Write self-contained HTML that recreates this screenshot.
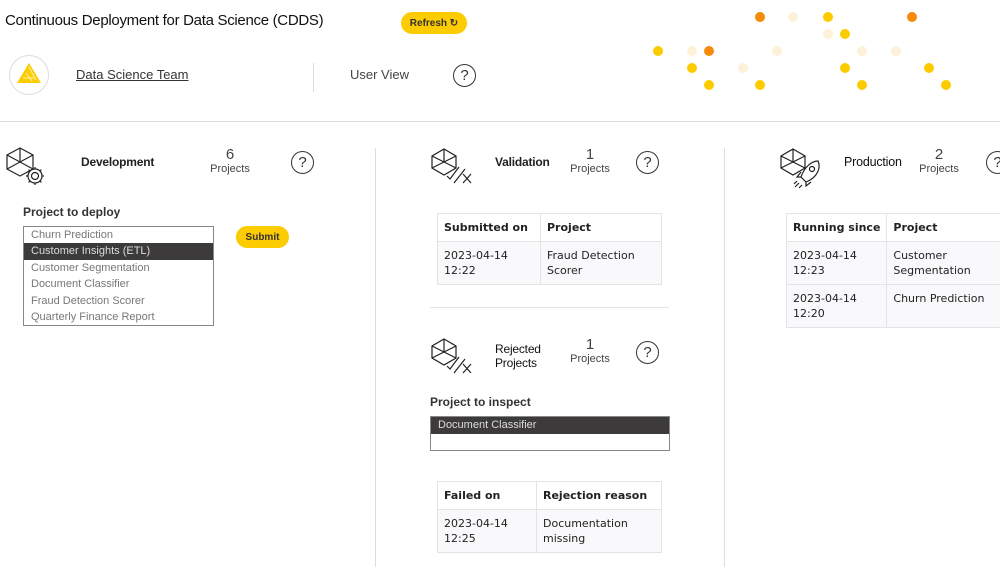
<!DOCTYPE html>
<html><head><meta charset="utf-8"><style>
*{margin:0;padding:0;box-sizing:border-box}
body{width:1000px;height:567px;overflow:hidden;background:#fff;font-family:"Liberation Sans",Arial,sans-serif;color:#222;position:relative}
.a{position:absolute;white-space:nowrap}
.btn{position:absolute;background:#fccb00;border-radius:12px;font-size:10px;font-weight:bold;color:#333;text-align:center}
.q{position:absolute;width:23px;height:23px;border:1.3px solid #333;border-radius:50%;font-size:15px;text-align:center;line-height:21px;color:#333}
.dot{position:absolute;width:10px;height:10px;border-radius:50%}
.y{background:#fccb00}.o{background:#f58a0b}.c{background:#fdf1d9}
.num{position:absolute;text-align:center;color:#444;font-size:11px;line-height:13px}
.num b{display:block;font-weight:normal;font-size:15px;line-height:16px}
table{position:absolute;border-collapse:collapse;font-family:"DejaVu Sans",sans-serif;font-size:11px;color:#222}
td,th{border:1px solid #e4e4e4;padding:6px 6px;text-align:left;vertical-align:top;line-height:15px}
th{font-weight:bold;height:28px;vertical-align:middle;background:#fff;white-space:nowrap}
td{background:#f9f8fa}
.lst{position:absolute;border:1px solid #888;font-size:11px;color:#777;background:#fff}
.lst div{height:16.4px;line-height:16.4px;padding-left:7px}
.lst .s{background:#3c3a3b;color:#ddd}
.lbl{position:absolute;font-size:12px;font-weight:bold;color:#333}
.h{position:absolute;font-size:12px;font-weight:bold;color:#222;letter-spacing:-0.2px}
</style></head><body>
<div class="a" style="left:5px;top:12px;font-size:15px;color:#111;letter-spacing:-0.3px">Continuous Deployment for Data Science (CDDS)</div>
<div class="btn" style="left:401px;top:12px;width:66px;height:22px;line-height:22px;padding-top:1px">Refresh ↻</div>

<div class="a" style="left:9px;top:55px;width:40px;height:40px;border:1.5px solid #ddd;border-radius:50%"></div>
<svg class="a" style="left:17px;top:62px" width="26" height="24"><polygon points="12,1 24,21 0,21" fill="#fccb00"/><path d="M12,5 L19,18 M9,11 L15,19 M6,16 L17,16" stroke="#fff3b0" stroke-width="1"/></svg>
<div class="a" style="left:76px;top:67px;font-size:13px;color:#333;text-decoration:underline">Data Science Team</div>
<div class="a" style="left:313px;top:63px;width:1px;height:29px;background:#ddd"></div>
<div class="a" style="left:350px;top:67px;font-size:13px;color:#444">User View</div>
<div class="q" style="left:453px;top:64px">?</div>

<div class="dot o" style="left:755px;top:12px"></div><div class="dot c" style="left:788px;top:12px"></div><div class="dot y" style="left:823px;top:12px"></div><div class="dot o" style="left:907px;top:12px"></div>
<div class="dot c" style="left:823px;top:29px"></div><div class="dot y" style="left:840px;top:29px"></div>
<div class="dot y" style="left:653px;top:46px"></div><div class="dot c" style="left:687px;top:46px"></div><div class="dot o" style="left:704px;top:46px"></div><div class="dot c" style="left:772px;top:46px"></div><div class="dot c" style="left:857px;top:46px"></div><div class="dot c" style="left:891px;top:46px"></div>
<div class="dot y" style="left:687px;top:63px"></div><div class="dot c" style="left:738px;top:63px"></div><div class="dot y" style="left:840px;top:63px"></div><div class="dot y" style="left:924px;top:63px"></div>
<div class="dot y" style="left:704px;top:80px"></div><div class="dot y" style="left:755px;top:80px"></div><div class="dot y" style="left:857px;top:80px"></div><div class="dot y" style="left:941px;top:80px"></div>

<div class="a" style="left:0;top:121px;width:1000px;height:1px;background:#ddd"></div>
<div class="a" style="left:375px;top:148px;width:1px;height:419px;background:#ddd"></div>
<div class="a" style="left:724px;top:148px;width:1px;height:419px;background:#ddd"></div>

<!-- Development -->
<svg class="a" style="left:6px;top:146px" width="42" height="42" fill="none" stroke="#222" stroke-width="1.2">
<polygon points="14,2 27,9 27,23 14,30 1,23 1,9"/><path d="M14,2 V16 M1,23 L14,16 L27,23 M1,9 L14,16 L27,9"/>
<circle cx="29" cy="30" r="4"/><path d="M29,21 v3 M29,36 v3 M20,30 h3 M35,30 h3 M22.6,23.6 l2,2 M33.4,34.4 l2,2 M22.6,36.4 l2,-2 M33.4,25.6 l2,-2"/><circle cx="29" cy="30" r="7" fill="#fff"/><circle cx="29" cy="30" r="3.5"/>
</svg>
<div class="h" style="left:81px;top:155px">Development</div>
<div class="num" style="left:205px;top:147px;width:50px"><b>6</b>Projects</div>
<div class="q" style="left:291px;top:151px">?</div>
<div class="lbl" style="left:23px;top:205px">Project to deploy</div>
<div class="lst" style="left:23px;top:226px;width:191px;height:100px">
<div>Churn Prediction</div><div class="s">Customer Insights (ETL)</div><div>Customer Segmentation</div><div>Document Classifier</div><div>Fraud Detection Scorer</div><div>Quarterly Finance Report</div></div>
<div class="btn" style="left:236px;top:226px;width:53px;height:22px;line-height:22px;padding-top:1px">Submit</div>

<!-- Validation -->
<svg class="a" style="left:431px;top:147px" width="44" height="40" fill="none" stroke="#222" stroke-width="1.2">
<polygon points="13,2 25,9 25,21 13,28 1,21 1,9"/><path d="M13,2 V15 M1,21 L13,15 L25,21 M1,9 L13,15 L25,9"/>
<path d="M16,29 l3,3 l9,-12 M23,36 l11,-14 M32,27 l8,9 M40,27 l-8,9"/>
</svg>
<div class="h" style="left:495px;top:155px">Validation</div>
<div class="num" style="left:565px;top:147px;width:50px"><b>1</b>Projects</div>
<div class="q" style="left:636px;top:151px">?</div>
<table style="left:437px;top:213px;width:225px"><tr><th style="width:103px">Submitted on</th><th>Project</th></tr>
<tr><td style="height:43px">2023-04-14<br>12:22</td><td>Fraud Detection<br>Scorer</td></tr></table>
<div class="a" style="left:430px;top:307px;width:239px;height:1px;background:#e4e4e4"></div>

<svg class="a" style="left:431px;top:337px" width="44" height="40" fill="none" stroke="#222" stroke-width="1.2">
<polygon points="13,2 25,9 25,21 13,28 1,21 1,9"/><path d="M13,2 V15 M1,21 L13,15 L25,21 M1,9 L13,15 L25,9"/>
<path d="M16,29 l3,3 l9,-12 M23,36 l11,-14 M32,27 l8,9 M40,27 l-8,9"/>
</svg>
<div class="h" style="left:495px;top:342px;line-height:14px;font-weight:normal;color:#111">Rejected<br>Projects</div>
<div class="num" style="left:565px;top:337px;width:50px"><b>1</b>Projects</div>
<div class="q" style="left:636px;top:341px">?</div>
<div class="lbl" style="left:430px;top:395px">Project to inspect</div>
<div class="lst" style="left:430px;top:416px;width:240px;height:35px"><div class="s" style="height:17px">Document Classifier</div></div>
<table style="left:437px;top:481px;width:225px"><tr><th style="width:99px">Failed on</th><th>Rejection reason</th></tr>
<tr><td style="height:43px">2023-04-14<br>12:25</td><td>Documentation<br>missing</td></tr></table>

<!-- Production -->
<svg class="a" style="left:780px;top:147px" width="44" height="44" fill="none" stroke="#222" stroke-width="1.2">
<polygon points="13,2 25,9 25,21 13,28 1,21 1,9"/><path d="M13,2 V15 M1,21 L13,15 L25,21 M1,9 L13,15 L25,9"/>
<path d="M38,14 C31,14 24,21 21,30 l5,5 C34,32 40,25 39,17 Z" fill="#fff"/><circle cx="32" cy="22" r="2.5"/><path d="M21,30 l-4,0 l4,-5 M26,35 l0,4 l5,-4 M19,36 l-4,4 M22,38 l-3,3 M17,34 l-3,3"/>
</svg>
<div class="h" style="left:844px;top:155px;font-weight:normal;color:#111;font-size:12.5px">Production</div>
<div class="num" style="left:914px;top:147px;width:50px"><b>2</b>Projects</div>
<div class="q" style="left:986px;top:151px">?</div>
<table style="left:786px;top:213px;width:240px"><tr><th style="width:98px">Running since</th><th>Project</th></tr>
<tr><td style="height:43px">2023-04-14<br>12:23</td><td>Customer<br>Segmentation</td></tr>
<tr><td style="height:42px">2023-04-14<br>12:20</td><td>Churn Prediction</td></tr></table>
</body></html>
